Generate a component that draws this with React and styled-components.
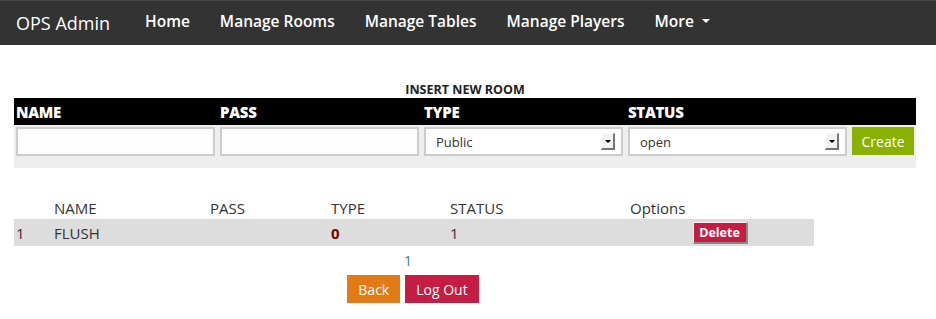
import React from "react";
import styled, {createGlobalStyle} from "styled-components";

const GlobalStyle = createGlobalStyle`
	body {
		margin: 0;
		font-family: "Open Sans", "Liberation Sans", sans-serif;
		color: #333;
		background: #fff;
	}
`;

const NavBar = styled.nav`
	display: flex;
	align-items: center;
	height: 45px;
	background: #333;
	border-top: 1px solid #444;
	box-sizing: border-box;
	padding-left: 16px;
`;

const Brand = styled.span`
	color: #fff;
	font-size: 18px;
	margin-right: 35px;
`;

const NavLink = styled.a`
	display: flex;
	align-items: center;
	color: #fff;
	font-size: 15.5px;
	font-weight: 600;
	margin-right: 30px;
	cursor: pointer;
	margin-top: -5px;
`;

const Caret = styled.span`
	display: inline-block;
	margin-left: 8px;
	border-left: 4px solid transparent;
	border-right: 4px solid transparent;
	border-top: 4px solid #fff;
`;

const Content = styled.main`
	padding: 36px 20px 0 14px;
`;

const FormTitle = styled.div`
	width: 902px;
	text-align: center;
	font-size: 12.5px;
	font-weight: 700;
	color: #222;
	line-height: 17px;
`;

const FormGrid = styled.div`
	display: grid;
	grid-template-columns: 204px 204px 204px 290px;
	width: 902px;
`;

const HeadCell = styled.div`
	background: #000;
	color: #fff;
	font-weight: 800;
	font-size: 15px;
	height: 27px;
	line-height: 28px;
	padding-left: 2px;
	letter-spacing: -0.3px;
`;

const InputCell = styled.div`
	display: flex;
	gap: 5px;
	background: #eee;
	padding: 2px 0 12px 2px;
`;

const TextInput = styled.input`
	width: 199px;
	height: 29px;
	box-sizing: border-box;
	border: 2px solid #ccc;
	background: #fdfdfd;
	margin: 0;
	padding: 0 8px;
	outline: none;
`;

const SelectBox = styled.div`
	display: flex;
	align-items: center;
	justify-content: space-between;
	width: ${(p) => p.$width}px;
	height: 29px;
	box-sizing: border-box;
	border: 2px solid #ccc;
	background: #fff;
	padding: 0 6px 0 10px;
	font-size: 13px;
	color: #333;
`;

const ArrowButton = styled.span`
	display: flex;
	align-items: center;
	justify-content: center;
	width: 14px;
	height: 17px;
	box-sizing: border-box;
	background: #f2f2f2;
	border-top: 1px solid #fff;
	border-left: 1px solid #fff;
	border-right: 2px solid #777;
	border-bottom: 2px solid #777;
	&::after {
		content: "";
		border-left: 3px solid transparent;
		border-right: 3px solid transparent;
		border-top: 3px solid #000;
	}
`;

const Button = styled.button`
	border: none;
	color: #fff;
	font-family: inherit;
	font-size: 14px;
	height: 28px;
	padding: 0 ${(p) => p.$pad || 11}px;
	background: ${(p) => p.$color};
	cursor: pointer;
`;

const Table = styled.div`
	display: grid;
	grid-template-columns: 38px 156px 121px 119px 180px 186px;
	width: 800px;
	margin-top: 29px;
	font-size: 15px;
`;

const TH = styled.div`
	height: 22px;
	line-height: 22px;
	padding-left: 2px;
	color: #333;
`;

const TD = styled.div`
	background: #ddd;
	height: 27px;
	line-height: 28px;
	padding-left: 2px;
	color: ${(p) => (p.$strong ? "#800000" : "#333")};
	font-weight: ${(p) => (p.$strong ? 700 : 400)};
	display: flex;
	align-items: center;
	justify-content: ${(p) => (p.$center ? "center" : "flex-start")};
`;

const DeleteButton = styled.button`
	background: #c51c44;
	color: #fff;
	font-family: inherit;
	font-weight: 700;
	font-size: 12.5px;
	height: 22px;
	width: 55px;
	padding: 0;
	border-top: 1px solid #f4f4f4;
	border-left: 1px solid #f4f4f4;
	border-right: 2px solid #888;
	border-bottom: 2px solid #888;
	margin-left: -4px;
`;

const Pager = styled.div`
	width: 788px;
	text-align: center;
	color: #337ab7;
	font-size: 14px;
	margin-top: 5px;
	line-height: 20px;
`;

const ActionRow = styled.div`
	display: flex;
	justify-content: center;
	gap: 5px;
	width: 798px;
	margin-top: 4px;
`;

const navItems = ["Home", "Manage Rooms", "Manage Tables", "Manage Players"];

const rooms = [{id: 1, name: "FLUSH", pass: "", type: "0", status: "1"}];

export default function App() {
	return (
		<>
			<GlobalStyle />
			<NavBar>
				<Brand>OPS Admin</Brand>
				{navItems.map((item) => (
					<NavLink key={item}>{item}</NavLink>
				))}
				<NavLink>
					More
					<Caret />
				</NavLink>
			</NavBar>
			<Content>
				<FormTitle>INSERT NEW ROOM</FormTitle>
				<FormGrid>
					<HeadCell>NAME</HeadCell>
					<HeadCell>PASS</HeadCell>
					<HeadCell>TYPE</HeadCell>
					<HeadCell>STATUS</HeadCell>
					<InputCell>
						<TextInput />
					</InputCell>
					<InputCell>
						<TextInput />
					</InputCell>
					<InputCell>
						<SelectBox $width={199}>
							Public
							<ArrowButton />
						</SelectBox>
					</InputCell>
					<InputCell>
						<SelectBox $width={219}>
							open
							<ArrowButton />
						</SelectBox>
						<Button $color="#8ab000" $pad={9.5}>
							Create
						</Button>
					</InputCell>
				</FormGrid>
				<Table>
					<TH />
					<TH>NAME</TH>
					<TH>PASS</TH>
					<TH>TYPE</TH>
					<TH>STATUS</TH>
					<TH>Options</TH>
					{rooms.map((room) => (
						<React.Fragment key={room.id}>
							<TD>{room.id}</TD>
							<TD>{room.name}</TD>
							<TD>{room.pass}</TD>
							<TD $strong>{room.type}</TD>
							<TD>{room.status}</TD>
							<TD $center>
								<DeleteButton>Delete</DeleteButton>
							</TD>
						</React.Fragment>
					))}
				</Table>
				<Pager>1</Pager>
				<ActionRow>
					<Button $color="#e47a16">Back</Button>
					<Button $color="#c51c44">Log Out</Button>
				</ActionRow>
			</Content>
		</>
	);
}
